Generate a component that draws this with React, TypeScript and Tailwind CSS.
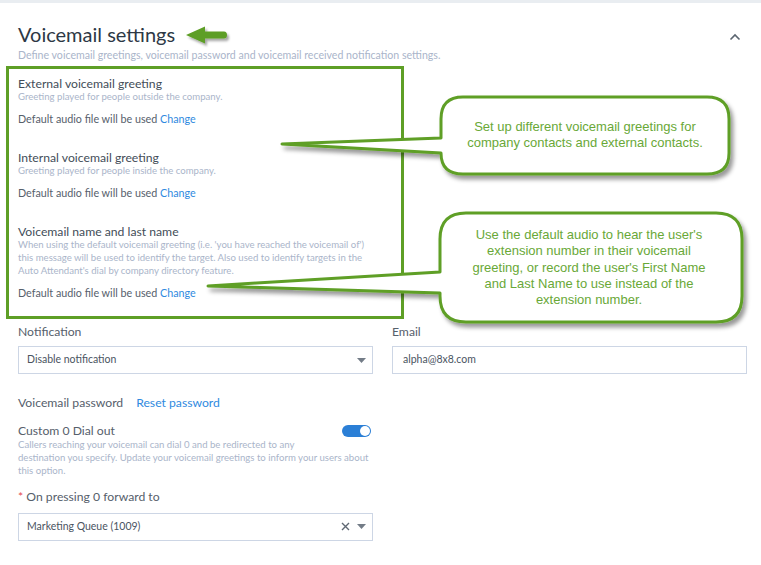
import React from "react";

const font = { fontFamily: "Lato, 'Open Sans', sans-serif" };
const calloutFont = { fontFamily: "'Liberation Sans', Arial, sans-serif" };

function Caret() {
  return (
    <svg width="9" height="5" viewBox="0 0 9 5" className="shrink-0">
      <path d="M0 0h9L4.5 5z" fill="#737c87" />
    </svg>
  );
}

function DefaultAudio() {
  return (
    <div className="mt-[9px] text-[10.75px] leading-[14px] text-[#56606b]">
      Default audio file will be used <span className="text-[#2f8ae0]">Change</span>
    </div>
  );
}

function GreetingRow({ title, desc, mt }: { title: string; desc: React.ReactNode; mt: string }) {
  return (
    <div className={mt}>
      <div className="text-[12.2px] leading-[14px] text-[#434d58]">{title}</div>
      <div className="text-[9.6px] leading-[12px] text-[#aab5ca]">{desc}</div>
      <DefaultAudio />
    </div>
  );
}

export default function App() {
  return (
    <div className="relative w-[761px] h-[565px] overflow-hidden bg-white" style={font}>
      <div className="h-[3px] bg-[#e9edf1]" />

      {/* header */}
      <div className="flex items-start justify-between pl-[18px] pr-[20px]">
        <div>
          <div className="mt-[19px] flex items-center">
            <h1 className="text-[20px] leading-[24px] text-[#2d3845]">Voicemail settings</h1>
            <svg width="46" height="22" viewBox="0 0 46 22" className="ml-[10px] mt-[1px] overflow-visible">
              <defs>
                <filter id="arrowShadow" x="-20%" y="-30%" width="150%" height="170%">
                  <feDropShadow dx="2" dy="2.5" stdDeviation="1.2" floodColor="#000" floodOpacity="0.35" />
                </filter>
              </defs>
              <path
                d="M1 11 L20 2.5 L20 7.5 L39 7.5 Q42 7.5 42 11 Q42 14.5 39 14.5 L20 14.5 L20 19.5 Z"
                fill="#5d9e25"
                filter="url(#arrowShadow)"
              />
            </svg>
          </div>
          <p className="mt-[2px] text-[10.6px] leading-[14px] text-[#aab5ca]">
            Define voicemail greetings, voicemail password and voicemail received notification settings.
          </p>
        </div>
        <svg width="12" height="8" viewBox="0 0 12 8" className="mt-[30px]">
          <path d="M1.5 6.5 L6 2 L10.5 6.5" fill="none" stroke="#5b6570" strokeWidth="1.6" />
        </svg>
      </div>

      {/* highlighted greetings group */}
      <div className="ml-[6px] mt-[4px] w-[398px] border-[3px] border-[#5e9f26] pl-[9px] pr-[20px] pt-[8px] pb-[16px]">
        <GreetingRow
          mt=""
          title="External voicemail greeting"
          desc="Greeting played for people outside the company."
        />
        <GreetingRow
          mt="mt-[25px]"
          title="Internal voicemail greeting"
          desc="Greeting played for people inside the company."
        />
        <div className="mt-[25px]">
          <div className="text-[12.2px] leading-[14px] text-[#434d58]">Voicemail name and last name</div>
          <div className="-mt-px whitespace-nowrap text-[9.6px] leading-[13px] text-[#aab5ca]">
            When using the default voicemail greeting (i.e. 'you have reached the voicemail of')
            <br />
            this message will be used to identify the target. Also used to identify targets in the
            <br />
            Auto Attendant's dial by company directory feature.
          </div>
          <DefaultAudio />
        </div>
      </div>

      {/* form */}
      <div className="pl-[18px]">
        <div className="mt-[6px] grid grid-cols-[355px_355px] gap-x-[19px]">
          <div>
            <div className="text-[12.2px] leading-[14px] text-[#56606b]">Notification</div>
            <div className="mt-[7px] flex h-[28px] items-center justify-between border border-[#cdd6e5] pl-[8px] pr-[6px]">
              <span className="text-[10.5px] text-[#4a545f]">Disable notification</span>
              <Caret />
            </div>
          </div>
          <div>
            <div className="text-[12.2px] leading-[14px] text-[#56606b]">Email</div>
            <div className="mt-[7px] flex h-[28px] items-center border border-[#cdd6e5] pl-[10px]">
              <span className="text-[10.5px] text-[#4a545f]">alpha@8x8.com</span>
            </div>
          </div>
        </div>

        <div className="mt-[22px] flex items-center text-[12.2px] leading-[14px]">
          <span className="text-[#56606b]">Voicemail password</span>
          <span className="ml-[13px] text-[#2f8ae0]">Reset password</span>
        </div>

        <div className="mt-[14px] w-[355px]">
          <div className="flex items-center justify-between">
            <span className="text-[12.2px] leading-[14px] text-[#56606b]">Custom 0 Dial out</span>
            <div className="mr-[2px] flex h-[12px] w-[29px] items-center justify-end rounded-full bg-[#2b7fd6] pr-[1px]">
              <div className="h-[10px] w-[10px] rounded-full bg-white" />
            </div>
          </div>
          <div className="whitespace-nowrap text-[9.6px] leading-[13px] text-[#aab5ca]">
            Callers reaching your voicemail can dial 0 and be redirected to any
            <br />
            destination you specify. Update your voicemail greetings to inform your users about
            <br />
            this option.
          </div>
        </div>

        <div className="mt-[12.5px] text-[12.2px] leading-[14px] text-[#56606b]">
          <span className="text-[#e5484d]">*</span> On pressing 0 forward to
        </div>
        <div className="mt-[9px] flex h-[28px] w-[355px] items-center justify-between border border-[#cdd6e5] pl-[8px] pr-[6px]">
          <span className="text-[10.5px] text-[#4a545f]">Marketing Queue (1009)</span>
          <div className="flex items-center gap-[7px]">
            <svg width="9" height="9" viewBox="0 0 9 9">
              <path d="M1 1 L8 8 M8 1 L1 8" stroke="#5f6873" strokeWidth="1.4" />
            </svg>
            <Caret />
          </div>
        </div>
      </div>

      {/* callout bubbles */}
      <svg className="pointer-events-none absolute left-0 top-0" width="761" height="565">
        <defs>
          <filter id="bubbleShadow" x="-10%" y="-20%" width="125%" height="150%">
            <feDropShadow dx="3" dy="4" stdDeviation="2" floodColor="#000" floodOpacity="0.4" />
          </filter>
        </defs>
        <path
          d="M463 97 H707 Q729 97 729 119 V153 Q729 174 707 174 H463 Q441 174 441 153 V153 L282 144 L441 138 V119 Q441 97 463 97 Z"
          fill="#fff"
          stroke="#5e9f26"
          strokeWidth="3"
          strokeLinejoin="round"
          filter="url(#bubbleShadow)"
        />
        <path
          d="M466 213 H716 Q742 213 742 239 V296 Q742 322 716 322 H466 Q440 322 440 296 V293 L208 286 L440 272 V239 Q440 213 466 213 Z"
          fill="#fff"
          stroke="#5e9f26"
          strokeWidth="3"
          strokeLinejoin="round"
          filter="url(#bubbleShadow)"
        />
      </svg>
      <div
        className="absolute left-[441px] top-[119px] w-[288px] text-center text-[13px] leading-[16px] text-[#69a837]"
        style={calloutFont}
      >
        Set up different voicemail greetings for
        <br />
        company contacts and external contacts.
      </div>
      <div
        className="absolute left-[438px] top-[227px] w-[302px] text-center text-[13px] leading-[16.3px] text-[#69a837]"
        style={calloutFont}
      >
        Use the default audio to hear the user's
        <br />
        extension number in their voicemail
        <br />
        greeting, or record the user's First Name
        <br />
        and Last Name to use instead of the
        <br />
        extension number.
      </div>
    </div>
  );
}
